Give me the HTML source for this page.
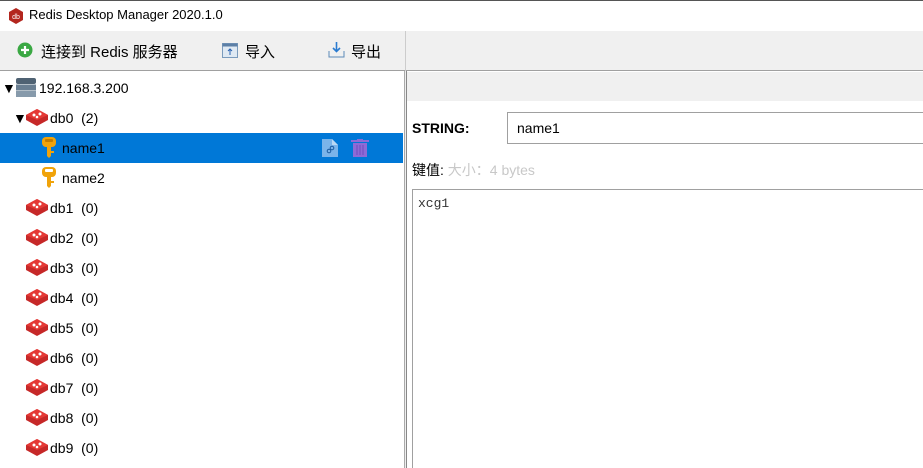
<!DOCTYPE html><html><head><meta charset="utf-8"><style>
*{margin:0;padding:0;box-sizing:border-box}
html,body{width:923px;height:468px;overflow:hidden}
body{background:#fff;font-family:"Liberation Sans","Noto Sans CJK SC",sans-serif;font-size:14px;color:#000;position:relative}
.a{position:absolute}
.row{position:absolute;left:0;width:403px;height:30px;line-height:30px;white-space:nowrap}
</style></head><body>
<div class="a" style="left:0;top:0;width:923px;height:31px;background:#fff;border-top:1px solid #555"></div>
<svg class="a" style="left:8px;top:8px" width="16" height="16"><polygon points="8,0 15,4 15,12 8,16 1,12 1,4" fill="#b3261e"/><text x="8" y="11" font-size="7" fill="#fff" text-anchor="middle" font-family="Liberation Sans">db</text></svg>
<div class="a" style="left:29px;top:7px;font-size:13px">Redis Desktop Manager 2020.1.0</div>
<div class="a" style="left:0;top:31px;width:923px;height:40px;background:#f0f0f0;border-bottom:1px solid #a0a0a0"></div>
<div class="a" style="left:405px;top:31px;width:1px;height:40px;background:#ccc"></div>
<svg class="a" style="left:17px;top:42px" width="16" height="16"><circle cx="8" cy="8" r="7.5" fill="#3aa843"/><path d="M8 4v8M4 8h8" stroke="#fff" stroke-width="2.2"/></svg>
<div class="a" style="left:41px;top:41px;font-size:15px">连接到 Redis 服务器</div>
<svg class="a" style="left:222px;top:43px" width="16" height="15"><rect x="0.5" y="0.5" width="15" height="14" fill="#dfe9f3" stroke="#7a9bbd"/><rect x="0.5" y="0.5" width="15" height="3" fill="#5c7fa6"/><path d="M8 12V6M6 8l2-2 2 2" stroke="#2a62b0" fill="none"/></svg>
<div class="a" style="left:245px;top:41px;font-size:15px">导入</div>
<svg class="a" style="left:328px;top:41px" width="17" height="18"><path d="M8.5 1v9M5 7l3.5 3.5L12 7" stroke="#2a7bd0" stroke-width="1.6" fill="none"/><path d="M1 10v6h15v-6" stroke="#5c8ab8" fill="none"/></svg>
<div class="a" style="left:351px;top:41px;font-size:15px">导出</div>
<div class="a" style="left:404px;top:71px;width:3px;height:397px;border-left:1px solid #aaa;border-right:1px solid #888;background:#eee"></div>
<div class="a" style="left:407px;top:72px;width:516px;height:29px;background:#f0f0f0"></div>
<div class="row" style="top:73px"><span class="a" style="left:2px;font-size:14px">▼</span>
<svg class="a" style="left:16px;top:5px" width="20" height="19"><rect x="0" y="0" width="20" height="6" rx="2" fill="#4f6273"/><rect x="0" y="6.5" width="20" height="6" fill="#6a7f92"/><rect x="0" y="13" width="20" height="6" fill="#879aab"/></svg>
<span class="a" style="left:39px">192.168.3.200</span></div>
<div class="row" style="top:103px"><span class="a" style="left:13px;font-size:14px">▼</span>
<svg class="a" style="left:25px;top:5px" width="24" height="19"><path d="M12 1L23 7v5L12 18 1 12V7z" fill="#c62828"/><path d="M12 1L23 7 12 12 1 7z" fill="#e53935"/><circle cx="9" cy="7" r="1.5" fill="#fff"/><circle cx="15" cy="6" r="1.5" fill="#fff"/><circle cx="12" cy="9" r="1.3" fill="#fff"/></svg>
<span class="a" style="left:50px">db0&nbsp; (2)</span></div>
<div class="row" style="top:133px;background:#0078d7">
<svg class="a" style="left:41px;top:4px" width="16" height="22"><rect x="1" y="0" width="14" height="10" rx="4" fill="#f0a30a"/><rect x="4" y="2" width="8" height="3" rx="1" fill="#c27c00"/><path d="M6 10h4v9l-2 2-2-2z" fill="#f0a30a"/><rect x="10" y="14" width="3" height="2" fill="#f0a30a"/></svg>
<span class="a" style="left:62px">name1</span>
<svg class="a" style="left:321px;top:6px" width="18" height="18"><path d="M1 0h10l6 6v12H1z" fill="#7ab4ea"/><path d="M11 0v6h6" fill="#b9d8f5"/><circle cx="8" cy="12" r="1.8" fill="none" stroke="#1a5aa0"/><circle cx="11" cy="9" r="1.8" fill="none" stroke="#1a5aa0"/></svg>
<svg class="a" style="left:351px;top:6px" width="18" height="18"><rect x="0" y="1" width="18" height="2" fill="#8e6ad6"/><rect x="6" y="0" width="6" height="2" fill="#8e6ad6"/><rect x="2" y="4" width="14" height="14" fill="#8e6ad6"/><path d="M6 6v10M9 6v10M12 6v10" stroke="#6f4cbf"/></svg></div>
<div class="row" style="top:163px">
<svg class="a" style="left:41px;top:4px" width="16" height="22"><rect x="1" y="0" width="14" height="10" rx="4" fill="#f0a30a"/><rect x="4" y="2" width="8" height="3" rx="1" fill="#fff"/><path d="M6 10h4v9l-2 2-2-2z" fill="#f0a30a"/><rect x="10" y="14" width="3" height="2" fill="#f0a30a"/></svg>
<span class="a" style="left:62px">name2</span></div>
<div id="dbs"></div>
<div class="a" style="left:412px;top:120px;font-weight:bold;font-size:14px">STRING:</div>
<div class="a" style="left:507px;top:112px;width:420px;height:32px;border:1px solid #a0a0a0;padding-left:9px;line-height:30px">name1</div>
<div class="a" style="left:412px;top:160px">键值: <span style="color:#c8c8c8">大小：4 bytes</span></div>
<div class="a" style="left:412px;top:189px;width:520px;height:279px;border:1px solid #a0a0a0;border-bottom:none;font-family:'Liberation Mono',monospace;font-size:13px;padding:6px 5px;color:#333">xcg1</div>
<script>
var h='';for(var i=1;i<=9;i++){var t=163+i*30;h+='<div class="row" style="top:'+t+'px"><svg class="a" style="left:25px;top:5px" width="24" height="19"><path d="M12 1L23 7v5L12 18 1 12V7z" fill="#c62828"/><path d="M12 1L23 7 12 12 1 7z" fill="#e53935"/><circle cx="9" cy="7" r="1.5" fill="#fff"/><circle cx="15" cy="6" r="1.5" fill="#fff"/><circle cx="12" cy="9" r="1.3" fill="#fff"/></svg><span class="a" style="left:50px">db'+i+'&nbsp; (0)</span></div>';}
document.getElementById('dbs').outerHTML=h;
</script>
</body></html>
